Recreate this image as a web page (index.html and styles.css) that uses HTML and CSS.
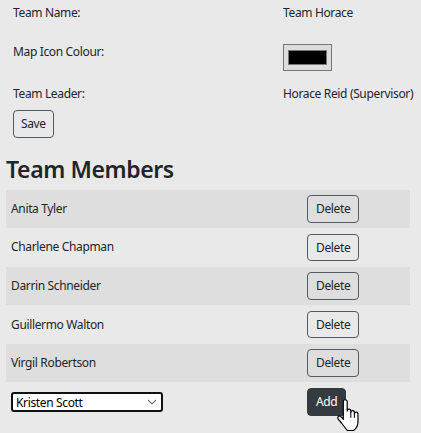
FILE: index.html
```html
<!DOCTYPE html>
<html>
<head>
<meta charset="utf-8">
<link rel="stylesheet" href="styles.css">
</head>
<body>
<div class="info">
  <div class="field f1">
    <div class="label">Team Name:</div>
    <div class="value">Team Horace</div>
  </div>
  <div class="field f2">
    <div class="label">Map Icon Colour:</div>
    <div class="value"><div class="color-btn"><div class="swatch"></div></div></div>
  </div>
  <div class="field f3">
    <div class="label">Team Leader:</div>
    <div class="value">Horace Reid (Supervisor)</div>
  </div>
  <button class="btn btn-outline save">Save</button>
</div>
<h2 class="heading">Team Members</h2>
<div class="members">
  <div class="member striped"><span class="name">Anita Tyler</span><button class="btn btn-outline del">Delete</button></div>
  <div class="member"><span class="name">Charlene Chapman</span><button class="btn btn-outline del">Delete</button></div>
  <div class="member striped"><span class="name">Darrin Schneider</span><button class="btn btn-outline del">Delete</button></div>
  <div class="member"><span class="name">Guillermo Walton</span><button class="btn btn-outline del">Delete</button></div>
  <div class="member striped"><span class="name">Virgil Robertson</span><button class="btn btn-outline del">Delete</button></div>
  <div class="member add-row">
    <div class="select-wrap">
      <select class="picker"><option>Kristen Scott</option></select>
      <svg class="chev" width="10" height="6" viewBox="0 0 10 6"><path d="M1 1 L5 5 L9 1" fill="none" stroke="#777" stroke-width="1.2"/></svg>
    </div>
    <div class="add-wrap">
      <button class="btn btn-dark">Add</button>
      <svg class="cursor" width="26" height="33" viewBox="0 0 17 22"><path d="M6 0.5 a1.3 1.3 0 0 1 1.3 1.3 V8 a1.2 1.2 0 0 1 2.4 0 V9 a1.2 1.2 0 0 1 2.4 0 V10 a1.2 1.2 0 0 1 2.4 0 V15 c0 3 -1.5 5 -3 6 H7.5 c-1 -1 -2.5 -3 -4 -5 L1.3 13.4 a1.2 1.2 0 0 1 1.8 -1.6 L4.7 13.5 V1.8 A1.3 1.3 0 0 1 6 0.5 Z" fill="#fff" stroke="#000" stroke-width="0.8" stroke-linejoin="round"/><path d="M9.7 9 V12.5 M12.1 10 V12.5" stroke="#000" stroke-width="0.7"/></svg>
    </div>
  </div>
</div>
</body>
</html>
```
FILE: styles.css
```css
html, body {
  margin: 0;
  padding: 0;
  background: #e9e9e9;
}
body {
  font-family: "Noto Sans", "DejaVu Sans", sans-serif;
  font-size: 12px;
  line-height: 16px;
  letter-spacing: -0.35px;
  color: #212529;
  width: 421px;
  height: 433px;
  overflow: hidden;
}
.info {
  padding: 5px 0 0 13px;
}
.field {
  display: grid;
  grid-template-columns: 270px auto;
  align-items: start;
  white-space: nowrap;
}
.f1 { margin-bottom: 23px; }
.f2 { margin-bottom: 15px; }
.f3 { margin-bottom: 8px; }
.color-btn {
  width: 49px;
  height: 27px;
  box-sizing: border-box;
  border: 1px solid #767676;
  background: #dddddd;
  display: flex;
  align-items: center;
  justify-content: center;
}
.swatch {
  width: 39px;
  height: 15px;
  box-sizing: border-box;
  background: #000;
  border: 1px solid #777;
}
.btn {
  font-family: inherit;
  font-size: 12px;
  letter-spacing: -0.35px;
  line-height: 17.5px;
  border-radius: 4px;
  padding: 4px 7px;
  margin: 0;
  cursor: pointer;
}
.btn-outline {
  background: transparent;
  border: 1px solid #555a60;
  color: #212529;
}
.btn-dark {
  background: #343a40;
  border: 1px solid #343a40;
  color: #fff;
  padding: 4px 8px;
}
.save {
  display: block;
}
.heading {
  margin: 16px 0 0 6px;
  font-size: 23px;
  letter-spacing: -0.4px;
  line-height: 30px;
  font-weight: 600;
  color: #212529;
}
.members {
  margin: 6px 11px 0 6px;
}
.member {
  display: grid;
  grid-template-columns: 296px auto;
  align-items: center;
  height: 38.6px;
  padding-left: 5px;
}
.member.striped {
  background: #dedede;
}
.del {
  justify-self: start;
  padding: 4px 8px;
}
.add-row {
  height: 39.4px;
}
.select-wrap {
  position: relative;
  width: 152px;
  height: 20px;
}
.picker {
  appearance: none;
  -webkit-appearance: none;
  width: 152px;
  height: 20px;
  box-sizing: border-box;
  border: 2px solid #111;
  border-radius: 3px;
  background: #fff;
  font-family: inherit;
  font-size: 12px;
  letter-spacing: -0.35px;
  color: #000;
  padding: 0 0 0 3px;
  margin: 0;
}
.chev {
  position: absolute;
  right: 6px;
  top: 7px;
}
.add-wrap {
  position: relative;
  justify-self: start;
}
.add-wrap .btn {
  display: block;
}
.cursor {
  position: absolute;
  left: 29px;
  top: 11px;
}
```
